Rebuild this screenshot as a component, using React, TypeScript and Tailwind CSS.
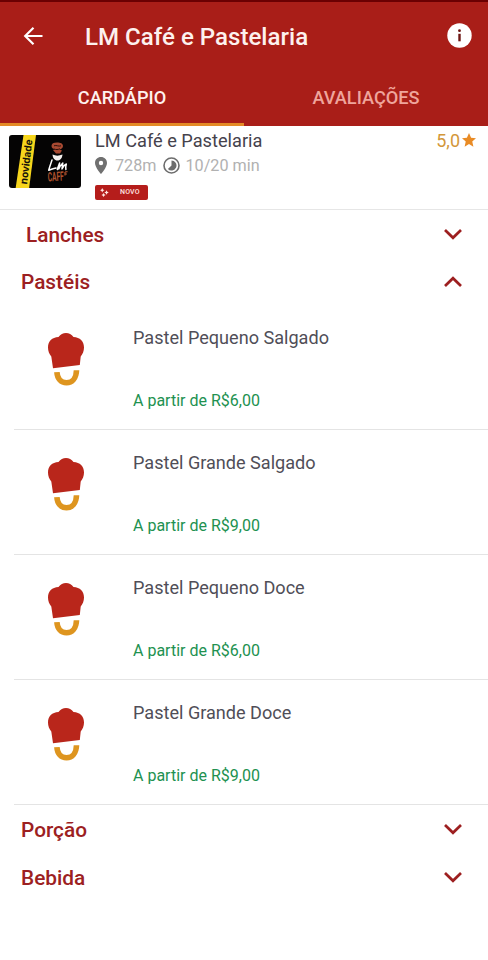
import { useState } from 'react';

interface Product {
  id: number;
  name: string;
  price: string;
}

interface Category {
  id: number;
  title: string;
  inset?: boolean;
  products: Product[];
}

const categories: Category[] = [
  { id: 1, title: 'Lanches', inset: true, products: [] },
  {
    id: 2,
    title: 'Pastéis',
    products: [
      { id: 1, name: 'Pastel Pequeno Salgado', price: 'R$6,00' },
      { id: 2, name: 'Pastel Grande Salgado', price: 'R$9,00' },
      { id: 3, name: 'Pastel Pequeno Doce', price: 'R$6,00' },
      { id: 4, name: 'Pastel Grande Doce', price: 'R$9,00' },
    ],
  },
  { id: 3, title: 'Porção', products: [] },
  { id: 4, title: 'Bebida', products: [] },
];

function StoreLogo() {
  return (
    <svg width="72" height="53" viewBox="0 0 72 53" className="block rounded-[3px]">
      <rect width="72" height="54" fill="#050404" />
      <path d="M14.5 0H27L20 54H6.5Z" fill="#f6d51c" />
      <text
        transform="translate(18 49.500) rotate(-83)"
        fontFamily="Inter, sans-serif"
        fontSize="10.3"
        fontWeight="700"
        textLength="45"
        lengthAdjust="spacingAndGlyphs"
        fill="#15120a"
      >
        novidade
      </text>
      <path d="M42.500 11c0-2.500 2-3.500 5.500-3.500s6 1 6 3.500c0 2-1.500 3-3.500 3.500l2.500 1-2 3h-4l-3-3.500 2-.8c-2-.3-3.500-1.200-3.500-3.200Z" fill="#a84a32" />
      <path d="M45 10.800c2.500-1 4.500 1 7 0M45 14c2 .8 4 .6 6-.2" stroke="#2a0f0a" strokeWidth="1" fill="none" />
      <path d="M43.500 19.500c3 1.500 6.500 1.500 10 0-.3 3.500-2 6-5 6s-4.700-2.500-5-6Z" fill="#f4f1ef" />
      <path
        d="M43 25c-1 3-2.200 6-3.300 10.300 2-1 4.500-1.500 7.300-2.300M48.300 34.500c.5-2 1.500-4.500 2.300-6.500-.3 2-.6 3.700-.8 6 1.200-2.700 2.500-4.800 4-6-.3 2-.6 3.700-.8 6 1.200-2.500 2.500-4.300 4.300-5-.6 2-.8 3.500-.4 5.500"
        stroke="#fff"
        strokeWidth="1.500"
        strokeLinecap="round"
        strokeLinejoin="round"
        fill="none"
      />
      <text
        transform="translate(39 46.500) rotate(-3)"
        fontFamily="Roboto, sans-serif"
        fontSize="13"
        fontWeight="700"
        textLength="16"
        lengthAdjust="spacingAndGlyphs"
        fill="#b0532f"
      >
        CAFF
      </text>
      <path d="M56 37l2.500-.3M56 37v3.500M56 39h2" stroke="#b0532f" strokeWidth="1.200" fill="none" />
    </svg>
  );
}

function ChefHat() {
  return (
    <svg width="38" height="54" viewBox="0 0 38 54" className="block">
      <path
        d="M6 36.300 4.300 24.500C2.300 22 1 19 1 15.500 1 9.500 5 5.300 11.500 5 13.500 2.500 16 1 19 1s5.500 1.500 7.500 4C33 5.300 37 9.500 37 15.500c0 3.500-1.300 6.500-3.300 9L32.800 33Z"
        fill="#b9261b"
      />
      <path d="M9.900 40.200c.4 6.600 4.200 10.600 9.600 10.600 5.600 0 9.800-4.600 10-12.500" stroke="#de951f" strokeWidth="5.600" fill="none" />
    </svg>
  );
}

function Chevron({ open }: { open: boolean }) {
  return (
    <svg width="18" height="12" viewBox="0 0 18 12" fill="none" stroke="#9d1f20" strokeWidth="2.700">
      <path d={open ? 'M1 11 9 3.200l8 7.800' : 'M1 2l8 7.800L17 2'} />
    </svg>
  );
}

export default function App() {
  const [tab, setTab] = useState<'menu' | 'reviews'>('menu');
  const [openId, setOpenId] = useState<number | null>(2);

  return (
    <div className="w-[488px] h-[960px] overflow-hidden bg-white font-[Roboto,sans-serif]">
      {/* App bar */}
      <header className="h-[125.5px] bg-[#a91e18] border-t-2 border-[#6b0002] flex flex-col">
        <div className="h-[70px] flex items-center pl-[23px] pr-4 shrink-0">
          <button aria-label="Voltar" className="-mt-[3px]">
            <svg width="20" height="20" viewBox="0 0 20 20" fill="none" stroke="#fff" strokeWidth="2.200">
              <path d="M19.500 10H2.500M10.500 1.700 2.200 10l8.300 8.300" />
            </svg>
          </button>
          <h1 className="ml-[42px] flex-1 text-[24.1px] font-medium text-[#fdf1ee] whitespace-nowrap">LM Café e Pastelaria</h1>
          <button aria-label="Informações" className="-mt-[4px]">
            <svg width="25" height="25" viewBox="0 0 25 25">
              <circle cx="12.500" cy="12.500" r="12.200" fill="#fff" />
              <circle cx="12.500" cy="7.700" r="1.400" fill="#6d1512" />
              <path d="M12.500 10.800v7.500" stroke="#6d1512" strokeWidth="2.400" />
            </svg>
          </button>
        </div>
        <nav className="flex flex-1 text-[18.2px]">
          <button
            onClick={() => setTab('menu')}
            className={`flex-1 pt-px border-b-3 font-medium ${tab === 'menu' ? 'border-[#e48b26] text-[#fff1ee]' : 'border-transparent text-[#efa59c]'}`}
          >
            CARDÁPIO
          </button>
          <button
            onClick={() => setTab('reviews')}
            className={`flex-1 pt-px border-b-3 font-medium ${tab === 'reviews' ? 'border-[#e48b26] text-[#fff1ee]' : 'border-transparent text-[#efa59c]'}`}
          >
            AVALIAÇÕES
          </button>
        </nav>
      </header>

      {/* Store */}
      <section className="h-[84.5px] flex pt-[9px] pl-[9px] pr-3 border-b border-[#e6e6e6]">
        <StoreLogo />
        <div className="ml-[14px] flex-1">
          <h2 className="-mt-[6px] text-[18.2px] leading-[24px] text-[#45424c] whitespace-nowrap">LM Café e Pastelaria</h2>
          <div className="mt-px flex items-center h-[25px] text-[16.2px] text-[#b1b1b1]">
            <svg width="12" height="17" viewBox="0 0 12 17" className="mr-2 -mt-[2px]">
              <path d="M6 0C2.600 0 0 2.600 0 5.900 0 10.200 6 17 6 17s6-6.800 6-11.100C12 2.600 9.400 0 6 0Zm0 8.200a2.200 2.200 0 1 1 0-4.400 2.200 2.200 0 0 1 0 4.400Z" fill="#707070" />
            </svg>
            <span>728m</span>
            <svg width="17" height="17" viewBox="0 0 17 17" className="ml-[6px] mr-[6px] -mt-[2px]">
              <circle cx="8.500" cy="8.500" r="7.500" fill="none" stroke="#6d6d6d" strokeWidth="1.600" />
              <path d="M8.500 3.500a5 5 0 1 1-3.600 8.500l3.600-3.500Z" fill="#6d6d6d" />
            </svg>
            <span>10/20 min</span>
          </div>
          <span className="mt-[6px] flex w-[53px] h-[15px] items-center rounded-[2px] bg-[#b51d1b] pl-[5px] text-[7px] font-medium text-[#ffe6e2]">
            <svg width="9" height="9" viewBox="0 0 9 9" fill="#ffe6e2" className="mr-[11px]">
              <path d="M2.200.1l.8 1.400 1.400.8-1.400.7-.8 1.400-.7-1.400L.1 2.300l1.400-.8ZM6.500 2.300l.8 1.500 1.500.7-1.500.8-.8 1.500-.7-1.500-1.500-.8 1.500-.7ZM3.500 5l.8 1.300 1.300.8-1.300.7-.8 1.200-.7-1.200-1.300-.7 1.300-.8Z" />
            </svg>
            <span className="pt-px tracking-[0.2px]">NOVO</span>
          </span>
        </div>
        <div className="flex items-start text-[18px] leading-[24px] -mt-[6px] text-[#d39739]">
          5,0
          <svg width="14" height="14" viewBox="0 0 24 24" className="ml-0.5 mt-[4px]" fill="#e98b25">
            <path d="M12 0l3.600 8.200 8.400.8-6.400 5.700 1.900 8.800L12 19l-7.500 4.500 1.900-8.800L0 9l8.400-.8Z" />
          </svg>
        </div>
      </section>

      {/* Categories */}
      <main>
        {categories.map((category) => (
          <section key={category.id}>
            <button
              onClick={() => setOpenId(openId === category.id ? null : category.id)}
              className={`flex w-full h-[47.5px] items-center justify-between pr-[26px] text-[20.8px] font-medium text-[#9c2021] ${category.inset ? 'pl-[26px]' : 'pl-[21px]'}`}
            >
              <span className="pt-[3px]">{category.title}</span>
              <Chevron open={openId === category.id} />
            </button>
            {openId === category.id &&
              category.products.map((product) => (
                <article key={product.id} className="ml-[14px] h-[125.1px] flex border-b border-[#e4e4e4]">
                  <div className="w-[119px] pl-[33px] pt-[27px]">
                    <ChefHat />
                  </div>
                  <div>
                    <h3 className="pt-[20px] text-[18.1px] leading-[26px] text-[#504e57]">{product.name}</h3>
                    <p className="mt-[37.500px] text-base text-[#219150]">A partir de {product.price}</p>
                  </div>
                </article>
              ))}
          </section>
        ))}
      </main>
    </div>
  );
}
